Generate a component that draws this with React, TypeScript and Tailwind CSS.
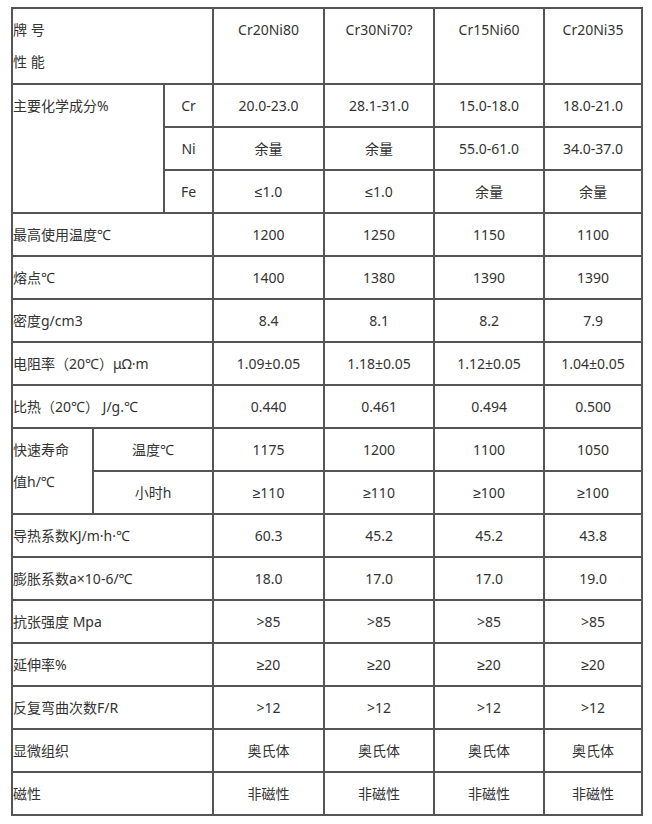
import React from 'react';

type Row = { label: React.ReactNode; values: string[] };

const cell = 'border-2 border-[#555] align-top pt-[5px] leading-[32px] h-[43px]';
const head = `${cell} text-left pl-0`;
const data = `${cell} text-center`;

const simpleRows: Row[] = [
  { label: '最高使用温度℃', values: ['1200', '1250', '1150', '1100'] },
  { label: '熔点℃', values: ['1400', '1380', '1390', '1390'] },
  { label: '密度g/cm3', values: ['8.4', '8.1', '8.2', '7.9'] },
  { label: '电阻率（20℃）μΩ·m', values: ['1.09±0.05', '1.18±0.05', '1.12±0.05', '1.04±0.05'] },
  { label: '比热（20℃） J/g.℃', values: ['0.440', '0.461', '0.494', '0.500'] },
];

const lowerRows: Row[] = [
  { label: '导热系数KJ/m·h·℃', values: ['60.3', '45.2', '45.2', '43.8'] },
  { label: '膨胀系数a×10-6/℃', values: ['18.0', '17.0', '17.0', '19.0'] },
  { label: '抗张强度 Mpa', values: ['>85', '>85', '>85', '>85'] },
  { label: '延伸率%', values: ['≥20', '≥20', '≥20', '≥20'] },
  { label: '反复弯曲次数F/R', values: ['>12', '>12', '>12', '>12'] },
  { label: '显微组织', values: ['奥氏体', '奥氏体', '奥氏体', '奥氏体'] },
  { label: '磁性', values: ['非磁性', '非磁性', '非磁性', '非磁性'] },
];

// the ≤ / ≥ signs come out in the latin face, not the wide CJK one
function Val({ v }: { v: string }) {
  if (v[0] === '≤' || v[0] === '≥') {
    return (
      <>
        <span style={{ fontFamily: '"Liberation Sans", sans-serif' }}>{v[0]}</span>
        {v.slice(1)}
      </>
    );
  }
  return <>{v}</>;
}

function Values({ values }: { values: string[] }) {
  return (
    <>
      {values.map((v, i) => (
        <td key={i} className={data}>
          <Val v={v} />
        </td>
      ))}
    </>
  );
}

function PlainRows({ rows }: { rows: Row[] }) {
  return (
    <>
      {rows.map((r, i) => (
        <tr key={i}>
          <td colSpan={3} className={head}>
            {r.label}
          </td>
          <Values values={r.values} />
        </tr>
      ))}
    </>
  );
}

export default function App() {
  return (
    <div
      className="min-h-screen bg-white pt-[7px] pl-[11px] text-[14px] text-[#333]"
      style={{ fontFamily: '"Noto Sans", "Noto Sans CJK SC", sans-serif' }}
    >
      <table className="w-[632px] table-fixed border-collapse border-2 border-[#555]">
        <colgroup>
          <col className="w-[81px]" />
          <col className="w-[71px]" />
          <col className="w-[49px]" />
          <col className="w-[111px]" />
          <col className="w-[110px]" />
          <col className="w-[110px]" />
          <col className="w-[98px]" />
        </colgroup>
        <tbody>
          <tr>
            <td colSpan={3} className={`${head} h-[76px]`}>
              牌 号
              <br />
              性 能
            </td>
            {['Cr20Ni80', 'Cr30Ni70?', 'Cr15Ni60', 'Cr20Ni35'].map((g) => (
              <td key={g} className={`${data} h-[76px]`}>
                {g}
              </td>
            ))}
          </tr>

          {/* chemical composition */}
          <tr>
            <td colSpan={2} rowSpan={3} className={head}>
              主要化学成分%
            </td>
            <td className={data}>Cr</td>
            <Values values={['20.0-23.0', '28.1-31.0', '15.0-18.0', '18.0-21.0']} />
          </tr>
          <tr>
            <td className={data}>Ni</td>
            <Values values={['余量', '余量', '55.0-61.0', '34.0-37.0']} />
          </tr>
          <tr>
            <td className={data}>Fe</td>
            <Values values={['≤1.0', '≤1.0', '余量', '余量']} />
          </tr>

          <PlainRows rows={simpleRows} />

          {/* accelerated life */}
          <tr>
            <td rowSpan={2} className={head}>
              快速寿命
              <br />
              值h/℃
            </td>
            <td colSpan={2} className={data}>
              温度℃
            </td>
            <Values values={['1175', '1200', '1100', '1050']} />
          </tr>
          <tr>
            <td colSpan={2} className={data}>
              小时h
            </td>
            <Values values={['≥110', '≥110', '≥100', '≥100']} />
          </tr>

          <PlainRows rows={lowerRows} />
        </tbody>
      </table>
    </div>
  );
}
